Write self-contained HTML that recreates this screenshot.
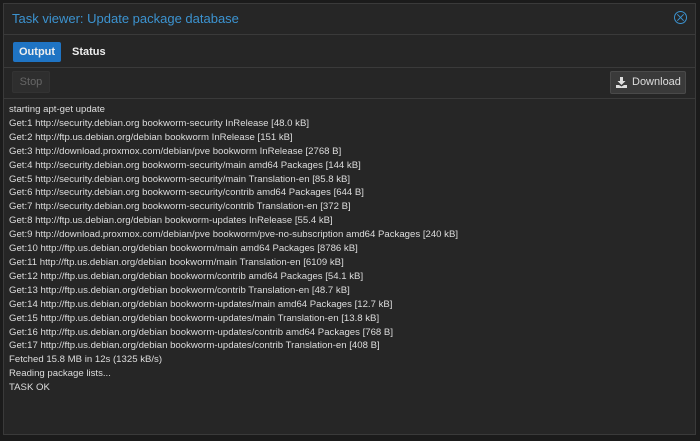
<!DOCTYPE html>
<html><head><meta charset="utf-8"><style>
html,body{margin:0;padding:0;width:700px;height:441px;background:#1b1b1b;overflow:hidden;font-family:"Liberation Sans",sans-serif}
.win{position:absolute;left:3px;top:3px;width:693px;height:432px;background:#262626;border:1px solid #3a3a3a;box-sizing:border-box}
.title{position:absolute;left:8px;top:7px;font-size:13px;color:#3c93d0}
.close{position:absolute;right:8px;top:7px;width:13px;height:13px;border:1px solid #3c93d0;border-radius:50%;box-sizing:border-box}
.close:before,.close:after{content:"";position:absolute;left:5px;top:1px;width:1px;height:9px;background:#3c93d0;transform:rotate(45deg)}
.close:after{transform:rotate(-45deg)}
.bar1{position:absolute;left:0;right:0;top:30px;height:32px;border-top:1px solid #3a3a3a;border-bottom:1px solid #3a3a3a}
.tab{position:absolute;top:7px;height:20px;line-height:20px;font-size:11px;font-weight:bold;color:#eee;padding:0 6px}
.tab.a{left:9px;background:#1f74c4;border-radius:2px}
.bar2{position:absolute;left:0;right:0;top:63px;height:31px;border-bottom:1px solid #3a3a3a}
.stop{position:absolute;left:8px;top:4px;width:36px;height:20px;background:#2e2e2e;border:1px solid #333;border-radius:2px;color:#666;font-size:11px;line-height:20px;text-align:center}
.dl{position:absolute;right:9px;top:4px;width:74px;height:21px;background:#3a3a3a;border:1px solid #4a4a4a;border-radius:2px;color:#ddd;font-size:11px;line-height:21px}
.dl span{position:absolute;left:21px}
.log{position:absolute;left:5px;top:99px;font-size:9.6px;line-height:13.9px;color:#ddd;white-space:pre}
</style></head><body>
<div class="win">
<div class="title">Task viewer: Update package database</div>
<div class="close"></div>
<div class="bar1"><div class="tab a">Output</div><div class="tab" style="left:62px">Status</div></div>
<div class="bar2"><div class="stop">Stop</div>
<div class="dl"><svg style="position:absolute;left:5px;top:5px" width="11" height="11" viewBox="0 0 11 11"><path d="M4 0h3v4h2.5L5.5 8 1.5 4H4z" fill="#ddd"/><path d="M0 8h3l2.5 1.5L8 8h3v3H0z" fill="#ddd"/></svg><span>Download</span></div></div>
<div class="log">starting apt-get update
Get:1 http://security.debian.org bookworm-security InRelease [48.0 kB]
Get:2 http://ftp.us.debian.org/debian bookworm InRelease [151 kB]
Get:3 http://download.proxmox.com/debian/pve bookworm InRelease [2768 B]
Get:4 http://security.debian.org bookworm-security/main amd64 Packages [144 kB]
Get:5 http://security.debian.org bookworm-security/main Translation-en [85.8 kB]
Get:6 http://security.debian.org bookworm-security/contrib amd64 Packages [644 B]
Get:7 http://security.debian.org bookworm-security/contrib Translation-en [372 B]
Get:8 http://ftp.us.debian.org/debian bookworm-updates InRelease [55.4 kB]
Get:9 http://download.proxmox.com/debian/pve bookworm/pve-no-subscription amd64 Packages [240 kB]
Get:10 http://ftp.us.debian.org/debian bookworm/main amd64 Packages [8786 kB]
Get:11 http://ftp.us.debian.org/debian bookworm/main Translation-en [6109 kB]
Get:12 http://ftp.us.debian.org/debian bookworm/contrib amd64 Packages [54.1 kB]
Get:13 http://ftp.us.debian.org/debian bookworm/contrib Translation-en [48.7 kB]
Get:14 http://ftp.us.debian.org/debian bookworm-updates/main amd64 Packages [12.7 kB]
Get:15 http://ftp.us.debian.org/debian bookworm-updates/main Translation-en [13.8 kB]
Get:16 http://ftp.us.debian.org/debian bookworm-updates/contrib amd64 Packages [768 B]
Get:17 http://ftp.us.debian.org/debian bookworm-updates/contrib Translation-en [408 B]
Fetched 15.8 MB in 12s (1325 kB/s)
Reading package lists...
TASK OK</div>
</div>
</body></html>
